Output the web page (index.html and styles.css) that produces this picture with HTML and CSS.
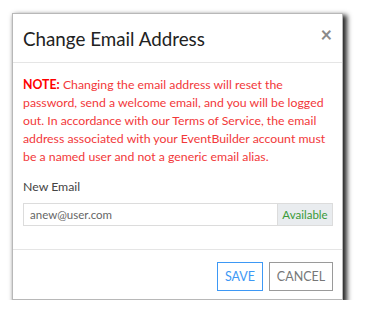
FILE: index.html
```html
<!DOCTYPE html>
<html>
<head>
<meta charset="utf-8">
<link rel="stylesheet" href="styles.css">
</head>
<body>
<div class="modal">
  <div class="modal-header">
    <h4 class="modal-title">Change Email Address</h4>
    <span class="close">&times;</span>
  </div>
  <div class="modal-body">
    <p class="note"><b>NOTE:</b> Changing the email address will reset the password, send a welcome email, and you will be logged out. In accordance with our Terms of Service, the email address associated with your EventBuilder account must be a named user and not a generic email alias.</p>
    <label class="label">New Email</label>
    <div class="input-group">
      <div class="input">anew@user.com</div>
      <div class="addon">Available</div>
    </div>
  </div>
  <div class="modal-footer">
    <button class="btn btn-save">SAVE</button>
    <button class="btn btn-cancel">CANCEL</button>
  </div>
</div>
</body>
</html>
```
FILE: styles.css
```css
html, body {
  margin: 0;
  padding: 0;
  background: #fff;
}
body {
  padding: 13px 0 0 12px;
  font-family: "Lato", "Noto Sans", sans-serif;
  color: #333;
}
.modal {
  width: 329px;
  height: 285px;
  border: 1px solid #b8b8b8;
  background: #fff;
  box-shadow: 3px 3px 5px 1px rgba(0,0,0,0.85);
  display: flex;
  flex-direction: column;
  box-sizing: content-box;
}
.modal-header {
  height: 48px;
  border-bottom: 1px solid #e5e5e5;
  display: flex;
  align-items: center;
  justify-content: space-between;
  padding: 0 10px 0 10px;
}
.modal-title {
  margin: 0;
  font-size: 18.8px;
  font-weight: 400;
  color: #222;
}
.close {
  font-size: 20px;
  font-weight: 700;
  color: #8a8a8a;
  line-height: 1;
  margin-top: -8px;
}
.modal-body {
  padding: 13px 9px 0 10px;
  height: 173px;
  border-bottom: 1px solid #e5e5e5;
}
.note {
  margin: 0;
  color: #f2383a;
  font-size: 12.3px;
  line-height: 18px;
}
.note b {
  color: #f00;
  font-weight: 700;
}
.label {
  display: block;
  margin-top: 13px;
  font-size: 12.3px;
  color: #444;
}
.input-group {
  display: flex;
  margin-top: 9px;
  height: 23px;
  border: 1px solid #dcdcdc;
  box-sizing: border-box;
}
.input {
  flex: 1;
  font-size: 11.5px;
  color: #666;
  padding-left: 6px;
  line-height: 21px;
}
.addon {
  width: 54px;
  background: #e9ecef;
  border-left: 1px solid #dcdcdc;
  color: #3a9a3a;
  font-size: 11.5px;
  line-height: 21px;
  text-align: center;
}
.modal-footer {
  flex: 1;
  display: flex;
  justify-content: flex-end;
  align-items: flex-start;
  gap: 6px;
  padding: 12px 9px 0 0;
}
.btn {
  height: 29px;
  background: #fff;
  font-family: "Lato", "Noto Sans", sans-serif;
  font-size: 12.5px;
  padding: 0;
  cursor: pointer;
}
.btn-save {
  width: 46px;
  border: 1px solid #3d98f5;
  color: #3d98f5;
}
.btn-cancel {
  width: 64px;
  border: 1px solid #9a9a9a;
  color: #777;
}
```
